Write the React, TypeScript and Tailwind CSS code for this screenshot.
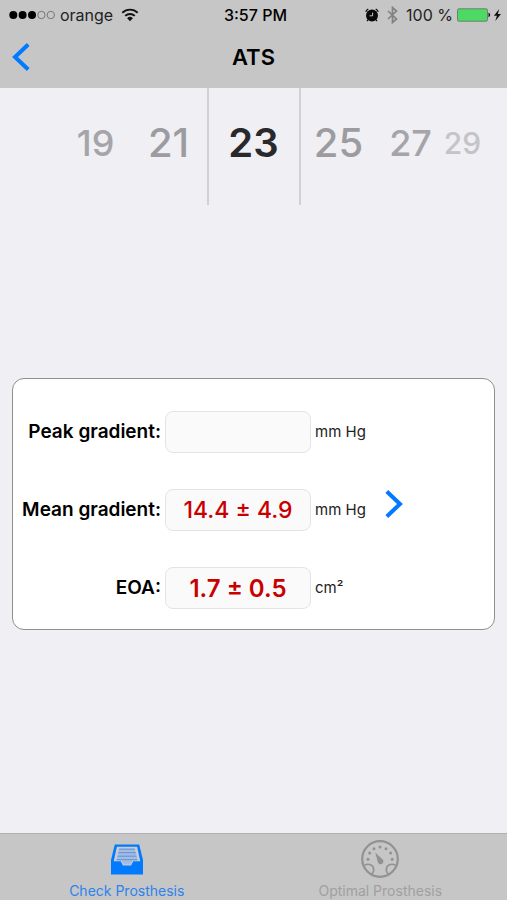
import { useState } from 'react';
import clsx from 'clsx';

const SIZES = [
  { value: 19, className: 'w-[70px] text-4xl text-[#a5a5a9]' },
  { value: 21, className: 'w-[76px] text-[40px] text-[#9c9ca0]' },
  { value: 25, className: 'w-[76px] text-[40px] text-[#9c9ca0]' },
  { value: 27, className: 'w-[68px] text-4xl text-[#a5a5a9]' },
  { value: 29, className: 'w-[36px] text-3xl text-[#c4c4c8]' },
];

const MEASUREMENTS = [
  { id: 'peak', label: 'Peak gradient:', value: '', unit: 'mm Hg', valueClass: 'text-2xl font-medium' },
  { id: 'mean', label: 'Mean gradient:', value: '14.4 ± 4.9', unit: 'mm Hg', valueClass: 'text-[23px] font-medium' },
  { id: 'eoa', label: 'EOA:', value: '1.7 ± 0.5', unit: 'cm²', valueClass: 'text-2xl font-semibold' },
];

function WifiIcon() {
  return (
    <svg width="18" height="14" viewBox="0 0 18 14" fill="none" stroke="#111" strokeWidth="1.9" aria-hidden="true">
      <path d="M1.3 4.8a11 11 0 0 1 15.4 0" />
      <path d="M4.2 7.9a7 7 0 0 1 9.6 0" />
      <path d="M9 13.2 6.1 10.3a4.1 4.1 0 0 1 5.8 0Z" fill="#111" stroke="none" />
    </svg>
  );
}

function AlarmIcon() {
  return (
    <svg width="14" height="14" viewBox="0 0 14 14" fill="none" aria-hidden="true">
      <circle cx="7" cy="7.4" r="6" fill="#0a0a0a" />
      <path d="M.7 3.7A7 7 0 0 1 3.3.9M10.7.9a7 7 0 0 1 2.6 2.8M3.2 11.5 2 13.2M10.8 11.5 12 13.2" stroke="#0a0a0a" strokeWidth="1.2" />
      <path d="M7.6 4.6v3.2H4.6" stroke="#c6c6c6" strokeWidth="1" />
    </svg>
  );
}

function BluetoothIcon() {
  return (
    <svg width="11" height="18" viewBox="0 0 11 18" fill="none" stroke="#828282" strokeWidth="1.7" aria-hidden="true">
      <path d="m1 5 8.5 8-4 3.5v-15l4 3.5L1 13" />
    </svg>
  );
}

function BatteryIcon() {
  return (
    <svg width="45" height="14" viewBox="0 0 45 14" aria-hidden="true">
      <rect x=".5" y=".8" width="30" height="12.4" rx="1.5" fill="#4cd964" stroke="#6f7d72" />
      <path d="M31.5 4.8c2.2.5 2.2 3.9 0 4.4Z" fill="#111" />
      <path d="M42.2 1 36.9 7.7h3l-1.6 5.4 5.7-7h-3.2Z" fill="#111" />
    </svg>
  );
}

function StatusBar() {
  return (
    <div className="grid h-[30px] grid-cols-[1fr_auto_1fr] items-center pr-[5px] pl-[9px] text-base leading-5 text-[#222]">
      <div className="flex items-center gap-[5px]">
        <svg width="46" height="10" viewBox="0 0 46 10" aria-hidden="true">
          <g fill="#000">
            <circle cx="4.3" cy="5" r="4" />
            <circle cx="13.6" cy="5" r="4" />
            <circle cx="23" cy="5" r="4" />
          </g>
          <g fill="none" stroke="#777" strokeWidth="1">
            <circle cx="32.4" cy="5" r="3.7" />
            <circle cx="41.8" cy="5" r="3.7" />
          </g>
        </svg>
        <span>orange</span>
        <span className="pl-[3px]">
          <WifiIcon />
        </span>
      </div>
      <span className="font-medium text-black">3:57 PM</span>
      <div className="flex items-center justify-end gap-1">
        <AlarmIcon />
        <span className="px-1">
          <BluetoothIcon />
        </span>
        <span className="whitespace-nowrap">100 %</span>
        <BatteryIcon />
      </div>
    </div>
  );
}

function SizePicker() {
  const renderSize = ({ value, className }: (typeof SIZES)[number]) => (
    <button
      key={value}
      type="button"
      className={clsx('flex shrink-0 items-center justify-center pb-2 font-medium', className)}
    >
      {value}
    </button>
  );

  return (
    <div className="grid h-[117px] grid-cols-[1fr_94px_1fr] leading-[48px]">
      <div className="flex justify-end">{SIZES.slice(0, 2).map(renderSize)}</div>
      <button
        type="button"
        aria-pressed="true"
        className="flex items-center justify-center border-x-2 border-[#d0d0d5] pb-2 text-[40px] font-semibold text-[#29292b]"
      >
        23
      </button>
      <div className="flex">{SIZES.slice(2).map(renderSize)}</div>
    </div>
  );
}

function TrayIcon() {
  return (
    <svg width="34" height="31" viewBox="0 0 34 31" aria-hidden="true">
      <path d="M4.8.5h24.4L33 16v14.5H1V16Z" fill="#007aff" />
      <path d="M6.9 2.8h20.2l3.2 14.4h-7l-2.2 4.3h-8.2l-2.2-4.3h-7Z" fill="#c9cdd4" />
      <path d="M9.2 4.6h15.6l2.7 11.8h-4.8L20.4 20.4h-6.8l-2.3-4H6.5Z" fill="#a5bce0" />
      <path d="M9 5.2h16M8.2 8.7h17.6M7.4 12.2h19.2M6.6 15.7h20.8" stroke="#5b93df" />
    </svg>
  );
}

function GaugeIcon() {
  return (
    <svg width="38" height="38" viewBox="0 0 38 38" fill="none" stroke="#929292" aria-hidden="true">
      <circle cx="19" cy="19" r="17.8" strokeWidth="2.2" />
      <path d="M3.5 25.2c4.2-2.2 9-.2 9.2 4.2.1 2.2-.8 3.9-2.4 5M34.5 25.2c-4.2-2.2-9-.2-9.2 4.2-.1 2.2.8 3.9 2.4 5" strokeWidth="1.6" />
      <path d="m14.2 12.5 7.3 6.7a2.9 2.9 0 1 1-4.8 2.6Z" fill="#929292" stroke="none" />
      <g fill="#929292" stroke="none">
        <circle cx="7" cy="19.2" r="1.5" />
        <circle cx="8.7" cy="13" r="1.5" />
        <circle cx="13" cy="8.8" r="1.5" />
        <circle cx="19" cy="7" r="1.5" />
        <circle cx="25" cy="8.8" r="1.5" />
        <circle cx="29.6" cy="13" r="1.5" />
        <circle cx="31.2" cy="19.2" r="1.5" />
      </g>
    </svg>
  );
}

export default function App() {
  const [tab, setTab] = useState('check');

  return (
    <div className="flex min-h-screen flex-col bg-[#efeff4] font-['Inter',sans-serif] text-black">
      <header className="bg-[#c6c6c6]">
        <StatusBar />
        <div className="grid h-[58px] grid-cols-[1fr_auto_1fr] items-center px-3 pb-1">
          <button type="button" aria-label="Back" className="justify-self-start">
            <svg width="18" height="28" viewBox="0 0 18 28" fill="none" stroke="#007aff" strokeWidth="4" aria-hidden="true">
              <path d="M16.2 1.5 3 14l13.2 12.5" />
            </svg>
          </button>
          <h1 className="text-[22px] leading-7 font-semibold">ATS</h1>
        </div>
      </header>

      <main className="flex-1">
        <SizePicker />

        <section className="mx-3 mt-[173px] flex items-center rounded-xl border border-[#8f8f8f] bg-white">
          <div className="flex flex-col gap-9 pt-8 pb-5">
            {MEASUREMENTS.map((item) => (
              <div key={item.id} className="flex items-center gap-1">
                <label htmlFor={item.id} className="w-[148px] text-right text-[19px] leading-6 font-semibold whitespace-nowrap">
                  {item.label}
                </label>
                <input
                  id={item.id}
                  readOnly
                  defaultValue={item.value}
                  className={clsx(
                    'h-[42px] w-[146px] rounded-lg border border-[#e4e4e4] bg-[#fafafa] text-center text-[#c90000] outline-none',
                    item.valueClass,
                  )}
                />
                <span className="w-[56px] text-[15px] leading-5 text-[#222]">{item.unit}</span>
              </div>
            ))}
          </div>
          <button type="button" aria-label="Show details" className="ml-[14px]">
            <svg width="18" height="28" viewBox="0 0 18 28" fill="none" stroke="#007aff" strokeWidth="4" aria-hidden="true">
              <path d="M1.8 1.5 15 14 1.8 26.5" />
            </svg>
          </button>
        </section>
      </main>

      <nav className="grid h-[67px] grid-cols-2 border-t border-[#b0b0b4] bg-[#c6c6c6] text-sm leading-4">
        <button
          type="button"
          aria-current={tab === 'check' ? 'page' : undefined}
          onClick={() => setTab('check')}
          className="flex flex-col items-center justify-between pt-[10px] pb-px text-[#2b83ee]"
        >
          <TrayIcon />
          <span>Check Prosthesis</span>
        </button>
        <button
          type="button"
          aria-current={tab === 'optimal' ? 'page' : undefined}
          onClick={() => setTab('optimal')}
          className="flex flex-col items-center justify-between pt-[6px] pb-px text-[#a0a0a0]"
        >
          <GaugeIcon />
          <span>Optimal Prosthesis</span>
        </button>
      </nav>
    </div>
  );
}
